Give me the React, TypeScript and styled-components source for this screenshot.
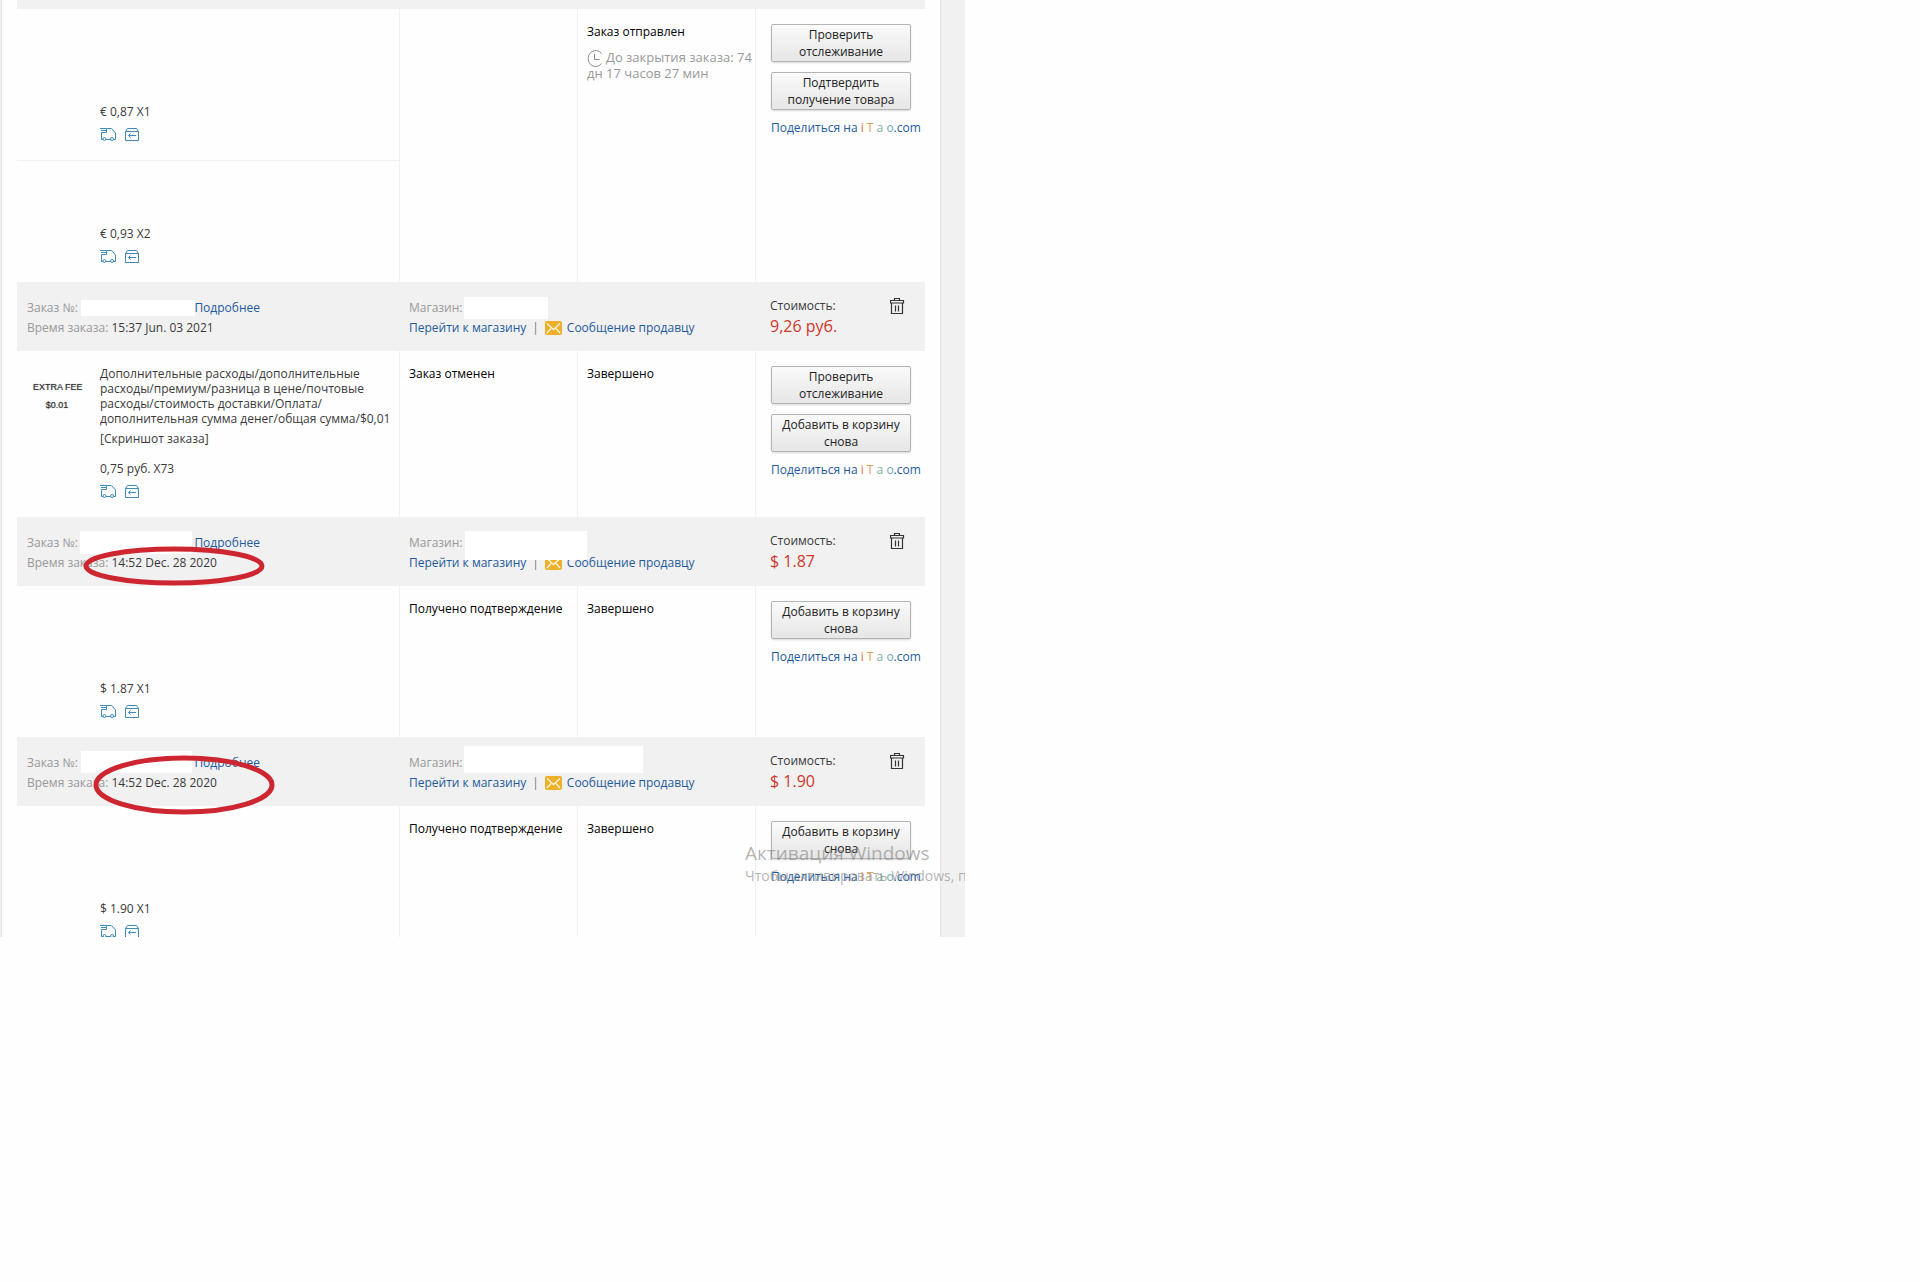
import React from "react";
import styled, { createGlobalStyle } from "styled-components";

const GlobalStyle = createGlobalStyle`
  body {
    margin: 0;
    background: #fefefe;
    color: #3a3a3a;
    font-family: "Open Sans", "Noto Sans", sans-serif;
    font-size: 12px;
    line-height: 15px;
  }
`;

const Screen = styled.main`
  position: relative;
  box-sizing: border-box;
  max-width: 965px;
  max-height: 937px;
  padding: 0 24px 0 2px;
  overflow: hidden;
  background: #f1f1f1;
`;

const Panel = styled.div`
  padding: 0 15px;
  background: #fefefe;
  border-right: 1px solid #e2e2e2;
  box-shadow: -1px 0 #e2e2e2;
`;

const Orders = styled.table`
  width: 100%;
  table-layout: fixed;
  border-collapse: separate;
  border-spacing: 0;
`;

const TopStrip = styled.td`
  height: 9px;
  padding: 0;
  background: #f1f1f1;
`;

const HeadCell = styled.td<{ $inset?: number }>`
  position: relative;
  height: 69px;
  box-sizing: border-box;
  padding: 16px 0 13px ${(p) => p.$inset ?? 10}px;
  vertical-align: top;
  background: #f1f1f1;
  line-height: 20px;
  white-space: nowrap;
`;

const Cell = styled.td`
  padding: 15px 0 0 9px;
  vertical-align: top;
  border-left: 1px solid #f1f1f1;
  color: #000;
`;

const ActionCell = styled(Cell)`
  padding: 15px 0 15px 15px;
  white-space: nowrap;
`;

const ProductCell = styled.td<{ $divided?: boolean }>`
  padding: 15px 0 16px;
  vertical-align: top;
  border-bottom: ${(p) => (p.$divided ? "1px solid #f1f1f1" : "0")};
`;

const Product = styled.div`
  display: grid;
  grid-template-columns: 64px 1fr;
  column-gap: 19px;
`;

const Thumb = styled.div`
  padding: 12px 0 0 16px;
  font: 500 9px/18px "Liberation Sans", Arial, sans-serif;
  color: #333;
  text-shadow: 0 0 1px #777;
  text-align: center;
  white-space: nowrap;
`;

const Title = styled.div<{ $lines: number }>`
  min-height: ${(p) => p.$lines * 15}px;
`;

const Snapshot = styled.div`
  height: 20px;
  margin-bottom: 10px;
  line-height: 25px;
`;

const Price = styled.div`
  line-height: 26px;
`;

const Badges = styled.div`
  display: flex;
  gap: 8px;
  height: 19px;
  align-items: center;
`;

const Muted = styled.span`
  color: #999;
`;

const Link = styled.a`
  color: #1f5a9d;
  text-decoration: none;
`;

const OrderLine = styled.div`
  display: flex;
  justify-content: space-between;
  width: 233px;
`;

const ShopLine = styled.div`
  display: flex;
  align-items: center;
`;

const Divider = styled.span`
  margin: 0 6px;
  color: #777;
`;

const MessageLink = styled(Link)`
  display: flex;
  align-items: center;
  gap: 5px;
`;

const Mask = styled.span<{ $x: number; $y: number; $w: number; $h: number }>`
  position: absolute;
  left: ${(p) => p.$x}px;
  top: ${(p) => p.$y}px;
  width: ${(p) => p.$w}px;
  height: ${(p) => p.$h}px;
  background: #fff;
`;

const Cost = styled.div`
  display: flex;
  justify-content: space-between;
  padding-right: 20px;
`;

const CostLabel = styled.div`
  line-height: 16px;
`;

const CostValue = styled.div`
  font-size: 16px;
  line-height: 24px;
  color: #d0372b;
`;

const TrashButton = styled.button`
  display: block;
  height: 16px;
  padding: 0;
  border: 0;
  background: none;
`;

const Remaining = styled.div`
  padding-top: 10px;
  color: #999;
  font-size: 13px;
  line-height: 16px;

  svg {
    display: inline-block;
    margin: -3px 3px -2px 0;
    vertical-align: middle;
  }
`;

const ActionButton = styled.button`
  display: block;
  width: 140px;
  height: 38px;
  margin-bottom: 10px;
  padding: 0 8px;
  border: 1px solid #b4b4b4;
  border-radius: 2px;
  background: linear-gradient(#fafafa, #e6e6e6);
  box-shadow: 0 1px 2px rgba(0, 0, 0, 0.15);
  color: #222;
  font: 500 12px/17px "Open Sans", "Noto Sans", sans-serif;
  white-space: normal;
`;

const ShareLink = styled(Link)`
  display: block;
  line-height: 16px;
`;

const Tint = styled.span<{ $c: string }>`
  color: ${(p) => p.$c};
`;

const Marker = styled.svg<{ $x: number; $y: number }>`
  position: absolute;
  left: ${(p) => p.$x}px;
  top: ${(p) => p.$y}px;
  z-index: 2;
`;

const Watermark = styled.div`
  position: absolute;
  left: 745px;
  top: 840px;
  color: rgba(130, 130, 130, 0.6);
  font-size: 14px;
  line-height: 18px;
  white-space: nowrap;
  pointer-events: none;
`;

const WatermarkTitle = styled.div`
  font-size: 19px;
  line-height: 27px;
`;

const Truck = () => (
  <svg width="17" height="13" viewBox="0 0 17 13" fill="none" stroke="#3f8bb5">
    <path d="M0 .5h6.500M1 2.500h5M1.500 4.500h5M6.500 .5v4M6.500 .5h5l4 4.500v6.500h-2M1.500 4.500v7h1.500M6 11.500h4.500" />
    <circle cx="4.500" cy="11" r="1.500" />
    <circle cx="12" cy="11" r="1.500" />
  </svg>
);

const ReturnBox = () => (
  <svg width="15" height="13" viewBox="0 0 15 13" fill="none" stroke="#3f8bb5">
    <path d="M.5 3.500h13v9h-13zM.5 3.500l2-3h9l2 3M3.500 7.500h7.500M5.500 5.500l-2 2 2 2" />
  </svg>
);

const Trash = () => (
  <svg width="15" height="17" viewBox="0 0 15 17" fill="none" stroke="#333">
    <path d="M4.500 2.500v-2h5v2M.5 2.500h13v2.500h-13zM1.500 5v10.500h11v-10.500M5.500 7.500v6M8.500 7.500v6" strokeWidth="1.200" />
  </svg>
);

const Envelope = () => (
  <svg width="17" height="14" viewBox="0 0 17 14">
    <rect width="17" height="14" rx="2" fill="#edb02a" />
    <path d="M2 2.500l6.500 6 6.500-6M2 12l4-4.500M15 12l-4-4.500" fill="none" stroke="#fff6dc" strokeWidth="1.300" />
  </svg>
);

const Clock = () => (
  <svg width="16" height="17" viewBox="0 0 16 17" fill="none" stroke="#8c8c8c">
    <path d="M14.500 3.500A7.500 8 0 1 0 14.500 13.500M7.500 4v5.500h5" />
  </svg>
);

type Box = [number, number, number, number];

type OrderHead = {
  date: string;
  cost: string;
  idMask: Box;
  shopMask: Box;
  mark?: { y: number; x: number; h: number };
};

const mask = ([x, y, w, h]: Box) => <Mask $x={x} $y={y} $w={w} $h={h} />;

function HeadRow({ date, cost, idMask, shopMask, mark }: OrderHead) {
  return (
    <tr>
      <HeadCell>
        <OrderLine>
          <Muted>Заказ №:</Muted>
          <Link href="#order">Подробнее</Link>
        </OrderLine>
        <div>
          <Muted>Время заказа:</Muted> {date}
        </div>
        {mask(idMask)}
        {mark && (
          <Marker $x={mark.x} $y={mark.y} width="182" height={mark.h} fill="none" stroke="#cd2630" strokeWidth="5">
            <ellipse cx="91" cy={mark.h / 2} rx="88" ry={mark.h / 2 - 3} />
          </Marker>
        )}
      </HeadCell>
      <HeadCell colSpan={2}>
        <Muted>Магазин:</Muted>
        <ShopLine>
          <Link href="#shop">Перейти к магазину</Link>
          <Divider>|</Divider>
          <MessageLink href="#message">
            <Envelope />
            Сообщение продавцу
          </MessageLink>
        </ShopLine>
        {mask(shopMask)}
      </HeadCell>
      <HeadCell $inset={15}>
        <Cost>
          <div>
            <CostLabel>Стоимость:</CostLabel>
            <CostValue>{cost}</CostValue>
          </div>
          <TrashButton type="button" aria-label="Удалить">
            <Trash />
          </TrashButton>
        </Cost>
      </HeadCell>
    </tr>
  );
}

type Item = {
  price: string;
  lines: number;
  title?: string;
  snapshot?: string;
  thumb?: [string, string];
  divided?: boolean;
};

function ProductInfo({ price, lines, title, snapshot, thumb, divided }: Item) {
  return (
    <ProductCell $divided={divided}>
      <Product>
        <Thumb>
          {thumb?.map((line) => (
            <div key={line}>{line}</div>
          ))}
        </Thumb>
        <div>
          <Title $lines={lines}>{title}</Title>
          <Snapshot>{snapshot}</Snapshot>
          <Price>{price}</Price>
          <Badges>
            <Truck />
            <ReturnBox />
          </Badges>
        </div>
      </Product>
    </ProductCell>
  );
}

function Actions({ labels, rowSpan }: { labels: string[]; rowSpan?: number }) {
  return (
    <ActionCell rowSpan={rowSpan}>
      {labels.map((label) => (
        <ActionButton type="button" key={label}>
          {label}
        </ActionButton>
      ))}
      <ShareLink href="#share">
        Поделиться на <Tint $c="#d9763f">i</Tint> <Tint $c="#e0a050">T</Tint> <Tint $c="#7fb59a">a</Tint>{" "}
        <Tint $c="#6fa9b0">o</Tint>.com
      </ShareLink>
    </ActionCell>
  );
}

export default function App() {
  return (
    <>
      <GlobalStyle />
      <Screen>
        <Panel>
          <Orders>
            <colgroup>
              <col style={{ width: 382 }} />
              <col style={{ width: 178 }} />
              <col style={{ width: 178 }} />
              <col />
            </colgroup>
            <tbody>
              <tr>
                <TopStrip colSpan={4} />
              </tr>
              <tr>
                <ProductInfo price="€ 0,87 X1" lines={3} divided />
                <Cell rowSpan={2} />
                <Cell rowSpan={2}>
                  Заказ отправлен
                  <Remaining>
                    <Clock />
                    До закрытия заказа: 74 дн 17 часов 27 мин
                  </Remaining>
                </Cell>
                <Actions rowSpan={2} labels={["Проверить отслеживание", "Подтвердить получение товара"]} />
              </tr>
              <tr>
                <ProductInfo price="€ 0,93 X2" lines={1} />
              </tr>
            </tbody>
            <tbody>
              <HeadRow
                date="15:37 Jun. 03 2021"
                cost="9,26 руб."
                idMask={[64, 18, 114, 16]}
                shopMask={[65, 15, 84, 22]}
              />
              <tr>
                <ProductInfo
                  price="0,75 руб. X73"
                  lines={4}
                  title="Дополнительные расходы/дополнительные расходы/премиум/разница в цене/почтовые расходы/стоимость доставки/Оплата/дополнительная сумма денег/общая сумма/$0,01"
                  snapshot="[Скриншот заказа]"
                  thumb={["EXTRA FEE", "$0.01"]}
                />
                <Cell>Заказ отменен</Cell>
                <Cell>Завершено</Cell>
                <Actions labels={["Проверить отслеживание", "Добавить в корзину снова"]} />
              </tr>
            </tbody>
            <tbody>
              <HeadRow
                date="14:52 Dec. 28 2020"
                cost="$ 1.87"
                idMask={[63, 14, 112, 23]}
                shopMask={[66, 14, 122, 29]}
                mark={{ x: 66, y: 29, h: 40 }}
              />
              <tr>
                <ProductInfo price="$ 1.87 X1" lines={3} />
                <Cell>Получено подтверждение</Cell>
                <Cell>Завершено</Cell>
                <Actions labels={["Добавить в корзину снова"]} />
              </tr>
            </tbody>
            <tbody>
              <HeadRow
                date="14:52 Dec. 28 2020"
                cost="$ 1.90"
                idMask={[64, 14, 111, 22]}
                shopMask={[65, 9, 179, 27]}
                mark={{ x: 76, y: 18, h: 60 }}
              />
              <tr>
                <ProductInfo price="$ 1.90 X1" lines={3} />
                <Cell>Получено подтверждение</Cell>
                <Cell>Завершено</Cell>
                <Actions labels={["Добавить в корзину снова"]} />
              </tr>
            </tbody>
          </Orders>
        </Panel>
        <Watermark>
          <WatermarkTitle>Активация Windows</WatermarkTitle>
          Чтобы активировать Windows, перейдите
        </Watermark>
      </Screen>
    </>
  );
}
